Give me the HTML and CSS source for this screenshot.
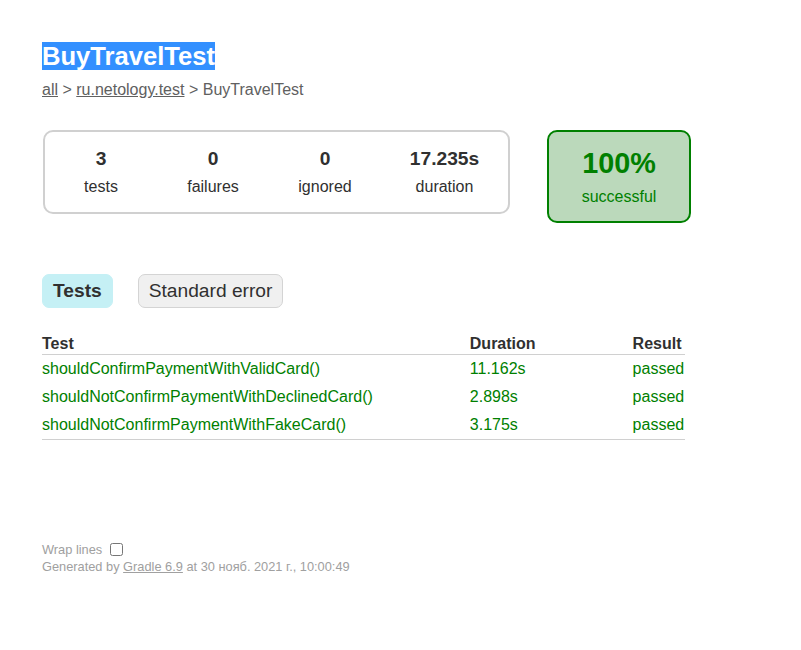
FILE: index.html
```html
<!DOCTYPE html>
<html>
<head>
<meta charset="utf-8">
<title>Test results - Class BuyTravelTest</title>
<link rel="stylesheet" href="styles.css">
</head>
<body>
<div class="content">
  <h1 class="title"><span class="sel">BuyTravelTest</span></h1>
  <div class="breadcrumbs"><a href="#">all</a> &gt; <a href="#">ru.netology.test</a> &gt; BuyTravelTest</div>

  <div class="summary">
    <table class="outer">
      <tr>
        <td>
          <div class="summary-group">
            <table class="inner">
              <tr>
                <td><div class="info-box"><div class="counter">3</div><p>tests</p></div></td>
                <td><div class="info-box"><div class="counter">0</div><p>failures</p></div></td>
                <td><div class="info-box"><div class="counter">0</div><p>ignored</p></div></td>
                <td><div class="info-box duration"><div class="counter">17.235s</div><p>duration</p></div></td>
              </tr>
            </table>
          </div>
        </td>
        <td>
          <div class="info-box success-rate"><div class="percent">100%</div><p>successful</p></div>
        </td>
      </tr>
    </table>
  </div>

  <div class="tabs">
    <ul class="tab-links">
      <li class="selected"><h2>Tests</h2></li>
      <li><a href="#">Standard error</a></li>
    </ul>
    <div class="tab">
      <table class="results">
        <thead>
          <tr>
            <th>Test</th>
            <th>Duration</th>
            <th>Result</th>
          </tr>
        </thead>
        <tbody>
          <tr>
            <td class="ok">shouldConfirmPaymentWithValidCard()</td>
            <td class="ok">11.162s</td>
            <td class="ok">passed</td>
          </tr>
          <tr>
            <td class="ok">shouldNotConfirmPaymentWithDeclinedCard()</td>
            <td class="ok">2.898s</td>
            <td class="ok">passed</td>
          </tr>
          <tr>
            <td class="ok">shouldNotConfirmPaymentWithFakeCard()</td>
            <td class="ok">3.175s</td>
            <td class="ok">passed</td>
          </tr>
        </tbody>
      </table>
    </div>
  </div>

  <div class="footer">
    <p>
      <span class="wrap-row"><label class="wrap-label" for="wrap">Wrap lines</label> <input id="wrap" class="wrap-toggle" type="checkbox" autocomplete="off"></span>
      Generated by <a href="#">Gradle 6.9</a> at 30 нояб. 2021 г., 10:00:49
    </p>
  </div>
</div>
</body>
</html>
```

FILE: styles.css
```css
html, body {
  margin: 0;
  padding: 0;
  background: #ffffff;
}

body {
  font-family: "Liberation Sans", Arial, sans-serif;
  font-size: 16px;
  color: #303030;
}

a, a:visited {
  color: #303030;
}

.content {
  padding: 25px 42px 30px 42px;
}

.title {
  font-size: 25.6px;
  font-weight: bold;
  margin: 17px 0 10px 0;
  white-space: nowrap;
}

.sel {
  background: #3390ff;
  color: #ffffff;
}

.breadcrumbs,
.breadcrumbs a {
  color: #606060;
}

.summary {
  margin-top: 30px;
  margin-bottom: 40px;
}

.summary table {
  border-collapse: collapse;
}

.summary td {
  vertical-align: top;
  padding: 1px;
}

.summary-group,
.success-rate {
  border: solid 2px #d0d0d0;
  border-radius: 10px;
}

.info-box {
  width: 110px;
  padding-top: 15px;
  padding-bottom: 15px;
  text-align: center;
}

.info-box p {
  margin: 0;
}

.counter,
.percent {
  font-size: 19.2px;
  font-weight: bold;
  margin-bottom: 8px;
}

.duration {
  width: 125px;
}

.success-rate {
  width: 140px;
  margin-left: 35px;
  background-color: #bbd9bb;
  border-color: #008000;
  color: #008000;
}

.success-rate .percent {
  font-size: 28.8px;
}

.tab-links {
  margin: 16px 0;
  padding: 10px 0;
  list-style: none;
  display: flex;
}

.tab-links li {
  padding: 5px 10px;
  border-radius: 7px;
  margin-right: 25px;
  border: solid 1px #d4d4d4;
  background-color: #f0f0f0;
}

.tab-links li.selected {
  background-color: #c5f0f5;
  border-color: #c5f0f5;
}

.tab-links a {
  font-size: 19.2px;
  display: block;
  text-decoration: none;
  color: #303030;
}

.tab-links h2 {
  font-size: 19.2px;
  margin: 0;
  padding: 0;
  white-space: nowrap;
}

.results {
  min-width: 350px;
  border-collapse: collapse;
  border-bottom: solid 1px #d0d0d0;
}

.results th {
  text-align: left;
  white-space: nowrap;
  padding: 1px 1px 1px 96px;
  border-bottom: solid 1px #d0d0d0;
}

.results td {
  white-space: nowrap;
  padding: 5px 1px 5px 96px;
}

.results th:first-child,
.results td:first-child {
  padding-left: 0;
}

.results td.ok {
  color: #008000;
}

.footer {
  margin-top: 100px;
  font-size: 12.8px;
  white-space: nowrap;
  color: #a0a0a0;
}

.footer p {
  margin: 0;
}

.footer a {
  color: #a0a0a0;
}

.wrap-row {
  display: block;
}

.wrap-label,
.wrap-toggle {
  vertical-align: middle;
}

.wrap-toggle {
  margin: 3px 3px 3px 4px;
}
```
